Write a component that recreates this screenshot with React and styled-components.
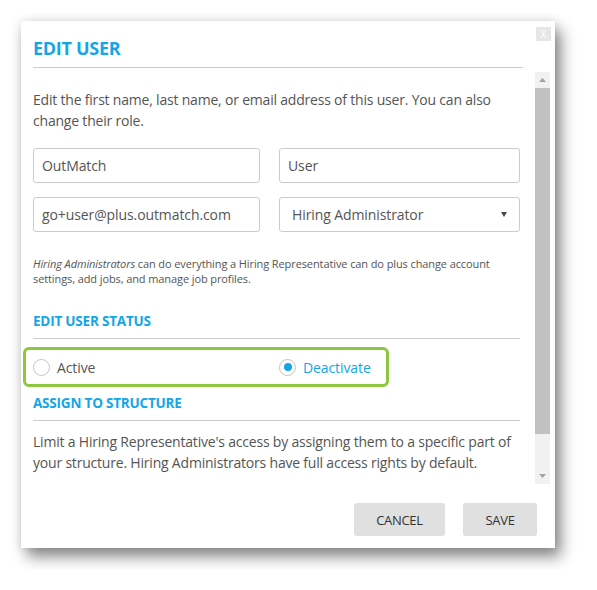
import React, { useState } from "react";
import styled, { createGlobalStyle } from "styled-components";

const GlobalStyle = createGlobalStyle`
  body {
    margin: 0;
    background: #ffffff;
    font-family: "Open Sans", "Noto Sans", sans-serif;
  }
`;

const Page = styled.div`
  padding: 21px;
  width: 534px;
`;

const Dialog = styled.div`
  position: relative;
  width: 534px;
  height: 527px;
  background: #ffffff;
  display: flex;
  flex-direction: column;
  box-shadow: 0 0 10px rgba(0, 0, 0, 0.12), 6px 9px 14px rgba(0, 0, 0, 0.45);
`;

const CloseButton = styled.button`
  position: absolute;
  top: 6px;
  right: 4px;
  width: 15px;
  height: 14px;
  border: none;
  padding: 0;
  background: #e6e6e6;
  color: #ffffff;
  font-family: "Open Sans", sans-serif;
  font-size: 10px;
  line-height: 14px;
`;

const Header = styled.div`
  margin: 0 32px 0 12px;
  padding-top: 15px;
  padding-bottom: 7px;
  border-bottom: 1px solid #cccccc;
`;

const Title = styled.h1`
  margin: 0;
  font-size: 18px;
  line-height: 24px;
  font-weight: 700;
  letter-spacing: -0.3px;
  color: #14a6e6;
`;

const Body = styled.div`
  display: flex;
  margin-top: 4px;
  height: 412px;
`;

const Content = styled.div`
  flex: 1;
  overflow: hidden;
  padding: 17px 15px 0 12px;
  color: #555555;
`;

const Scrollbar = styled.div`
  width: 15px;
  margin-right: 5px;
  background: #f1f1f1;
  display: flex;
  flex-direction: column;
`;

const ScrollArrow = styled.div`
  height: 16px;
  display: flex;
  align-items: center;
  justify-content: center;
`;

const ScrollThumb = styled.div`
  height: 346px;
  background: #c1c1c1;
`;

const ScrollTrack = styled.div`
  flex: 1;
`;

const Paragraph = styled.p`
  margin: 0;
  font-size: 14px;
  line-height: 21px;
  letter-spacing: -0.2px;
`;

const FieldGrid = styled.div`
  display: grid;
  grid-template-columns: 227px 241px;
  column-gap: 19px;
  row-gap: 14px;
  margin-top: 17px;
`;

const Input = styled.input`
  box-sizing: border-box;
  height: 35px;
  width: 100%;
  border: 1px solid #cccccc;
  border-radius: 3px;
  padding: 0 8px;
  font-family: inherit;
  font-size: 14px;
  letter-spacing: -0.1px;
  color: #555555;
  outline: none;
`;

const SelectBox = styled.div`
  box-sizing: border-box;
  height: 35px;
  border: 1px solid #cccccc;
  border-radius: 3px;
  padding: 0 12px 0 12px;
  display: flex;
  align-items: center;
  justify-content: space-between;
  font-size: 14px;
  letter-spacing: -0.1px;
  color: #555555;
`;

const Caret = styled.span`
  width: 0;
  height: 0;
  border-left: 3.5px solid transparent;
  border-right: 3.5px solid transparent;
  border-top: 5px solid #444444;
`;

const Note = styled.div`
  margin: 24px 0 0;
  font-size: 11px;
  line-height: 15px;
  letter-spacing: -0.1px;
  color: #555555;
`;

const NoteLine = styled.div`
  white-space: nowrap;
`;

const SectionTitle = styled.h2`
  margin: ${(p) => p.$top}px 0 0;
  padding-bottom: 7px;
  border-bottom: 1px solid #cccccc;
  font-size: 13.5px;
  line-height: 20px;
  font-weight: 700;
  letter-spacing: -0.2px;
  color: #14a6e6;
`;

const Highlight = styled.div`
  display: inline-flex;
  align-items: center;
  margin: 8px 0 0 -10px;
  height: 34px;
  padding: 0 15px 0 7px;
  border: 3px solid #8dc63f;
  border-radius: 6px;
`;

const RadioLabel = styled.label`
  display: flex;
  align-items: center;
  gap: 7px;
  width: ${(p) => (p.$wide ? "246px" : "auto")};
  font-size: 14px;
  letter-spacing: -0.1px;
  color: ${(p) => (p.$checked ? "#14a6e6" : "#555555")};
  cursor: pointer;
`;

const RadioCircle = styled.span`
  box-sizing: border-box;
  width: 17px;
  height: 17px;
  border-radius: 50%;
  border: 1px solid #c4c4c4;
  background: #ffffff;
  display: flex;
  align-items: center;
  justify-content: center;

  &::after {
    content: "";
    width: 8px;
    height: 8px;
    border-radius: 50%;
    background: ${(p) => (p.$checked ? "#14a6e6" : "transparent")};
  }
`;

const StructureText = styled(Paragraph)`
  margin-top: 10px;
`;

const Footer = styled.div`
  display: flex;
  justify-content: flex-end;
  gap: 18px;
  padding: 19px 18px 0 0;
`;

const Button = styled.button`
  height: 33px;
  width: ${(p) => p.$w}px;
  padding: 0;
  border: none;
  border-radius: 3px;
  background: #e0e0e0;
  color: #333333;
  font-family: inherit;
  font-size: 13px;
  letter-spacing: -0.3px;
`;

const Arrow = ({ up }) => (
  <svg width="7" height="4" viewBox="0 0 7 4">
    <path d={up ? "M0 4 L3.5 0 L7 4 Z" : "M0 0 L3.5 4 L7 0 Z"} fill="#a3a3a3" />
  </svg>
);

const App = () => {
  const [status, setStatus] = useState("deactivate");

  return (
    <Page>
      <GlobalStyle />
      <Dialog>
        <CloseButton>X</CloseButton>
        <Header>
          <Title>EDIT USER</Title>
        </Header>
        <Body>
          <Content>
            <Paragraph>
              Edit the first name, last name, or email address of this user. You can also
              change their role.
            </Paragraph>
            <FieldGrid>
              <Input defaultValue="OutMatch" />
              <Input defaultValue="User" />
              <Input defaultValue="go+user@plus.outmatch.com" />
              <SelectBox>
                Hiring Administrator
                <Caret />
              </SelectBox>
            </FieldGrid>
            <Note>
              <NoteLine>
                <i>Hiring Administrators</i> can do everything a Hiring Representative can
                do plus change account
              </NoteLine>
              <NoteLine>settings, add jobs, and manage job profiles.</NoteLine>
            </Note>
            <SectionTitle $top={25}>EDIT USER STATUS</SectionTitle>
            <Highlight>
              <RadioLabel $wide onClick={() => setStatus("active")}>
                <RadioCircle $checked={status === "active"} />
                Active
              </RadioLabel>
              <RadioLabel
                $checked={status === "deactivate"}
                onClick={() => setStatus("deactivate")}
              >
                <RadioCircle $checked={status === "deactivate"} />
                Deactivate
              </RadioLabel>
            </Highlight>
            <SectionTitle $top={6}>ASSIGN TO STRUCTURE</SectionTitle>
            <StructureText>
              Limit a Hiring Representative's access by assigning them to a specific part of
              your structure. Hiring Administrators have full access rights by default.
            </StructureText>
          </Content>
          <Scrollbar>
            <ScrollArrow>
              <Arrow up />
            </ScrollArrow>
            <ScrollThumb />
            <ScrollTrack />
            <ScrollArrow>
              <Arrow />
            </ScrollArrow>
          </Scrollbar>
        </Body>
        <Footer>
          <Button $w={91}>CANCEL</Button>
          <Button $w={74}>SAVE</Button>
        </Footer>
      </Dialog>
    </Page>
  );
};

export default App;
